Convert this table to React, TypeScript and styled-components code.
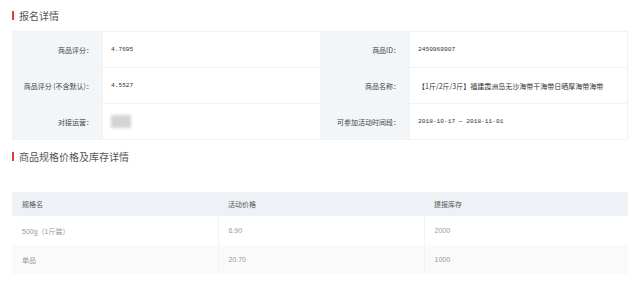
import React from 'react';
import styled, { createGlobalStyle } from 'styled-components';

const GlobalStyle = createGlobalStyle`
  body {
    margin: 0;
    background: #ffffff;
    font-family: "Noto Sans CJK SC", "Noto Sans", sans-serif;
  }
`;

const Page = styled.div`
  padding: 0 12px;
  width: 616px;
`;

const SectionTitle = styled.div<{ $top?: number }>`
  display: flex;
  align-items: center;
  gap: 5px;
  height: 30px;
  margin-top: ${(p) => p.$top ?? 0}px;
  font-size: 10px;
  color: #555;

  &::before {
    content: '';
    width: 2px;
    height: 9px;
    background: #e4393c;
  }
`;

const InfoTable = styled.table`
  width: 616px;
  border-collapse: collapse;
  table-layout: fixed;
  margin-top: 1px;
  font-size: 7px;
`;

const Label = styled.td`
  height: 35px;
  padding: 0 9px 0 0;
  text-align: right;
  background: #f3f6f9;
  color: #444;
  border: 1px solid #f1f3f5;
  white-space: nowrap;
`;

const Value = styled.td<{ $mono?: boolean }>`
  padding: 0 0 0 8px;
  color: #333;
  border: 1px solid #f1f3f5;
  white-space: nowrap;
  font-family: ${(p) =>
    p.$mono ? '"Liberation Mono", monospace' : '"Noto Sans CJK SC", sans-serif'};
  font-size: ${(p) => (p.$mono ? '6.2px' : '7px')};
`;

const Blurred = styled.div`
  width: 20px;
  height: 13px;
  background: #d4d4d4;
  filter: blur(1.5px);
`;

const SpecTable = styled.table`
  width: 616px;
  border-collapse: collapse;
  table-layout: fixed;
  margin-top: 21px;
  font-size: 7px;
`;

const HeadCell = styled.th`
  height: 24px;
  padding: 0 0 0 10px;
  text-align: left;
  font-weight: normal;
  color: #555;
  background: #eef2f6;
`;

const SpecRow = styled.tr<{ $alt?: boolean }>`
  background: ${(p) => (p.$alt ? '#fafafa' : '#ffffff')};
`;

const SpecCell = styled.td`
  height: 29px;
  padding: 0 0 0 10px;
  color: #999;
  font-family: "Liberation Sans", "Noto Sans CJK SC", sans-serif;
  border-right: 1px solid #f4f4f4;

  &:last-child {
    border-right: none;
  }
`;

const specs = [
  { name: '500g（1斤装）', price: '6.90', stock: '2000' },
  { name: '单品', price: '20.70', stock: '1000' },
];

const App: React.FC = () => {
  return (
    <>
      <GlobalStyle />
      <Page>
        <SectionTitle>报名详情</SectionTitle>
        <InfoTable>
          <colgroup>
            <col style={{ width: 90 }} />
            <col style={{ width: 218 }} />
            <col style={{ width: 89 }} />
            <col />
          </colgroup>
          <tbody>
            <tr>
              <Label>商品评分：</Label>
              <Value $mono>4.7695</Value>
              <Label>商品ID：</Label>
              <Value $mono>2450969907</Value>
            </tr>
            <tr>
              <Label>商品评分 (不含默认)：</Label>
              <Value $mono>4.5527</Value>
              <Label>商品名称：</Label>
              <Value>【1斤/2斤/3斤】福建霞洲岛无沙海带干海带日晒厚海带海带</Value>
            </tr>
            <tr>
              <Label>对接运营：</Label>
              <Value>
                <Blurred />
              </Value>
              <Label>可参加活动时间段：</Label>
              <Value $mono>2018-10-17 ~ 2018-11-01</Value>
            </tr>
          </tbody>
        </InfoTable>

        <SectionTitle $top={1}>商品规格价格及库存详情</SectionTitle>
        <SpecTable>
          <colgroup>
            <col style={{ width: 206 }} />
            <col style={{ width: 206 }} />
            <col />
          </colgroup>
          <thead>
            <tr>
              <HeadCell>规格名</HeadCell>
              <HeadCell>活动价格</HeadCell>
              <HeadCell>提报库存</HeadCell>
            </tr>
          </thead>
          <tbody>
            {specs.map((s, i) => (
              <SpecRow key={s.name} $alt={i % 2 === 1}>
                <SpecCell>{s.name}</SpecCell>
                <SpecCell>{s.price}</SpecCell>
                <SpecCell>{s.stock}</SpecCell>
              </SpecRow>
            ))}
          </tbody>
        </SpecTable>
      </Page>
    </>
  );
};

export default App;
